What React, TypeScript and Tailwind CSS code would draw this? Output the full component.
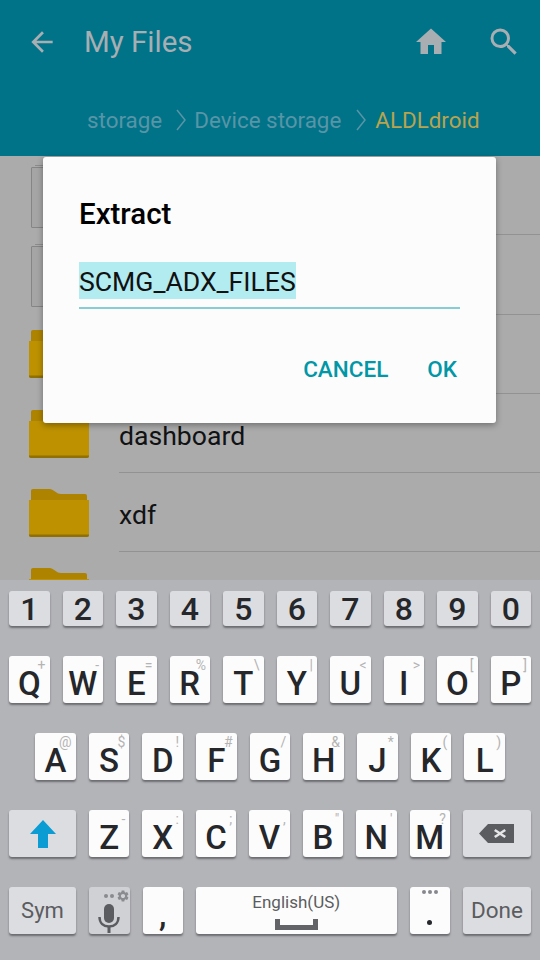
import { MdArrowBack, MdHome, MdSearch, MdSettings } from 'react-icons/md'

const FONT = { fontFamily: 'Roboto, sans-serif' }

const rows: { name: string; kind: 'file' | 'folder' }[] = [
  { name: '', kind: 'file' },
  { name: '', kind: 'file' },
  { name: '', kind: 'folder' },
  { name: 'dashboard', kind: 'folder' },
  { name: 'xdf', kind: 'folder' },
  { name: '', kind: 'folder' },
]

const numberRow = ['1', '2', '3', '4', '5', '6', '7', '8', '9', '0']
const topRow = [
  ['Q', '+'], ['W', '-'], ['E', '='], ['R', '%'], ['T', '\\'],
  ['Y', '|'], ['U', '<'], ['I', '>'], ['O', '['], ['P', ']'],
]
const homeRow = [
  ['A', '@'], ['S', '$'], ['D', '!'], ['F', '#'], ['G', '/'],
  ['H', '&'], ['J', '*'], ['K', '('], ['L', ')'],
]
const bottomRow = [
  ['Z', '-'], ['X', ':'], ['C', ';'], ['V', ','], ['B', '"'], ['N', "'"], ['M', '?'],
]

function FolderIcon() {
  return (
    <svg width="60" height="48" viewBox="0 0 60 48" className="shrink-0">
      <path d="M2 2q0-2 2-2h17q2 0 5 2.500 3 2.500 6 2.500h24q2 0 2 2v4H2z" fill="#ad8300" />
      <path d="M0 11h60v35q0 2-2 2H2q-2 0-2-2z" fill="#bd9100" />
      <path d="M0 46q0 2 2 2h56q2 0 2-2v-.6H0z" fill="#8f7000" />
    </svg>
  )
}

function FileIcon() {
  return (
    <div className="relative mt-[3px] ml-[2px] h-[61px] w-[48px] shrink-0 rounded-[1px] border border-[#858585] bg-[#a5a5a5]">
      <div className="absolute -top-[3px] left-[3px] h-[1px] w-[8px] bg-[#8c8c8c]" />
    </div>
  )
}

function ListRow({ name, kind }: { name: string; kind: 'file' | 'folder' }) {
  return (
    <div className="flex h-[79.3px] shrink-0 items-center pl-[29px]">
      <div className="w-[60px] shrink-0">{kind === 'file' ? <FileIcon /> : <FolderIcon />}</div>
      <div className="ml-[30px] flex h-full flex-1 items-center border-b border-[#929292] pt-[5px] text-[26.6px] text-[#111214]">
        {name}
      </div>
    </div>
  )
}

function Key({
  label,
  hint,
  className = '',
  dark = false,
  children,
}: {
  label?: string
  hint?: string
  className?: string
  dark?: boolean
  children?: React.ReactNode
}) {
  return (
    <div
      className={`relative flex min-w-0 flex-1 items-center justify-center rounded-[3px] shadow-[0_2px_2px_rgba(60,60,65,0.6)] ${
        dark ? 'bg-[#dcdde0]' : 'bg-[#fcfcfc]'
      } ${className}`}
    >
      {label && <span className="pt-[7px] text-[33px] leading-none font-medium text-[#25272b]">{label}</span>}
      {hint && (
        <span className="absolute -top-[1px] right-[4px] text-[14px] leading-[20px] text-[#b4b4b4]">{hint}</span>
      )}
      {children}
    </div>
  )
}

function Keyboard() {
  return (
    <div className="flex h-[380px] shrink-0 flex-col gap-[30px] bg-[#b3b4b8] px-[9px] pt-[11px]">
      <div className="flex h-[35px] gap-[13px]">
        {numberRow.map((n) => (
          <div
            key={n}
            className="flex flex-1 items-center justify-center rounded-[3px] bg-[#dcdde0] text-[32px] leading-none font-medium text-[#25272b] shadow-[0_2px_2px_rgba(60,60,65,0.6)]"
          >
            {n}
          </div>
        ))}
      </div>

      <div className="flex h-[47px] gap-[13px]">
        {topRow.map(([k, h]) => (
          <Key key={k} label={k} hint={h} />
        ))}
      </div>

      <div className="flex h-[47px] gap-[13px] px-[26px]">
        {homeRow.map(([k, h]) => (
          <Key key={k} label={k} hint={h} />
        ))}
      </div>

      <div className="flex h-[47px] gap-[13px]">
        <Key dark className="max-w-[67px] min-w-[67px]">
          <svg width="26" height="28" viewBox="0 0 26 28">
            <path d="M13 0l13 14h-8v14H8V14H0z" fill="#0b9cd4" />
          </svg>
        </Key>
        {bottomRow.map(([k, h]) => (
          <Key key={k} label={k} hint={h} />
        ))}
        <Key dark className="max-w-[68px] min-w-[68px]">
          <svg width="35" height="19" viewBox="0 0 35 19">
            <path d="M0 9.500L9 0h26v19H9z" fill="#5b5c60" />
            <path d="M16.500 5l4.500 3 4.500-3 1.500 2-4 2.500 4 2.500-1.500 2-4.500-3-4.500 3-1.500-2 4-2.500-4-2.500z" fill="#e6e6e8" />
          </svg>
        </Key>
      </div>

      <div className="flex h-[47px] gap-[13px]">
        <div className="flex w-[67px] shrink-0 items-center justify-center rounded-[3px] bg-[#dcdde0] text-[22px] text-[#5b5c60] shadow-[0_2px_2px_rgba(60,60,65,0.6)]">
          Sym
        </div>
        <div className="relative flex w-[40.500px] shrink-0 items-center justify-center rounded-[3px] bg-[#d0d1d4] shadow-[0_2px_2px_rgba(60,60,65,0.6)]">
          <svg width="22" height="29" viewBox="0 0 22 29" className="mt-[15px]">
            <rect x="6" y="0" width="10" height="19" rx="5" fill="#5b5c60" />
            <path d="M1.500 13c0 6 4 9.500 9.500 9.500s9.500-3.500 9.500-9.500" fill="none" stroke="#5b5c60" strokeWidth="2.500" />
            <rect x="9.500" y="22" width="3" height="7" fill="#5b5c60" />
          </svg>
          <div className="absolute top-[2px] right-0 flex items-center gap-[2px]">
            <span className="h-[4px] w-[4px] rounded-full bg-[#8a8b8f]" />
            <span className="h-[4px] w-[4px] rounded-full bg-[#8a8b8f]" />
            <MdSettings size={14} className="text-[#8a8b8f]" />
          </div>
        </div>
        <div className="flex w-[40.500px] shrink-0 items-end justify-center rounded-[3px] bg-[#fcfcfc] pb-[3px] text-[33px] leading-none font-medium text-[#25272b] shadow-[0_2px_2px_rgba(60,60,65,0.6)]">
          ,
        </div>
        <div className="flex flex-1 flex-col items-center rounded-[3px] bg-[#fcfcfc] pt-[5px] shadow-[0_2px_2px_rgba(60,60,65,0.6)]">
          <span className="text-[17px] leading-[20px] text-[#5b5c60]">English(US)</span>
          <svg width="43" height="11" viewBox="0 0 43 11" className="mt-[7px]">
            <path d="M0 0h5v6h33V0h5v11H0z" fill="#636468" />
          </svg>
        </div>
        <div className="relative flex w-[40.500px] shrink-0 items-center justify-center rounded-[3px] bg-[#fcfcfc] shadow-[0_2px_2px_rgba(60,60,65,0.6)]">
          <div className="absolute top-[3px] flex gap-[2px]">
            <span className="h-[4px] w-[4px] rounded-full bg-[#87888c]" />
            <span className="h-[4px] w-[4px] rounded-full bg-[#87888c]" />
            <span className="h-[4px] w-[4px] rounded-full bg-[#87888c]" />
          </div>
          <span className="mt-[23px] h-[5px] w-[5px] rounded-full bg-[#25272b]" />
        </div>
        <div className="flex w-[68px] shrink-0 items-center justify-center rounded-[3px] bg-[#dcdde0] text-[22.5px] text-[#5b5c60] shadow-[0_2px_2px_rgba(60,60,65,0.6)]">
          Done
        </div>
      </div>
    </div>
  )
}

export default function App() {
  return (
    <div className="relative flex h-[960px] w-[540px] flex-col overflow-hidden bg-[#ababab]" style={FONT}>
      <header className="h-[156px] shrink-0 bg-[#007389] text-[#a8aeb2]">
        <div className="flex h-[84px] items-center pl-[26px] pr-[18px]">
          <MdArrowBack size={32} />
          <h1 className="ml-[26px] flex-1 pt-[2px] text-[29.5px] leading-none">My Files</h1>
          <MdHome size={36} className="mr-[37px]" />
          <MdSearch size={36} />
        </div>
        <div className="flex items-center pt-[18px] pl-[87px] text-[22.4px] leading-[36px] text-[#5895a6]">
          <span>storage</span>
          <svg width="10" height="22" viewBox="0 0 10 22" className="mr-[8px] ml-[14px]">
            <path d="M1 1l8 10-8 10" fill="none" stroke="#5895a6" strokeWidth="1.500" />
          </svg>
          <span>Device storage</span>
          <svg width="10" height="22" viewBox="0 0 10 22" className="mr-[9px] ml-[15px]">
            <path d="M1 1l8 10-8 10" fill="none" stroke="#5895a6" strokeWidth="1.500" />
          </svg>
          <span className="text-[#b9a34e]">ALDLdroid</span>
        </div>
      </header>

      <div className="min-h-0 flex-1 overflow-hidden">
        {rows.map((r, i) => (
          <ListRow key={i} name={r.name} kind={r.kind} />
        ))}
      </div>

      <Keyboard />

      <div className="absolute top-[157px] left-[43px] h-[266px] w-[453px] rounded-[3px] bg-[#fcfcfc] px-[36px] pt-[40px] shadow-[0_2px_6px_rgba(0,0,0,0.35)]">
        <h2 className="text-[29.5px] leading-[34px] font-medium text-black">Extract</h2>
        <div className="mt-[31px] h-[47px] border-b-[2px] border-[#86cdd6]">
          <span className="inline-block h-[37px] bg-[#b2ebf0] text-[26.6px] leading-[39px] text-[#111]">
            SCMG_ADX_FILES
          </span>
        </div>
        <div className="mt-[43px] flex justify-end gap-[39px] pr-[3px] text-[22.5px] leading-[34px] font-medium text-[#0097a7]">
          <span>CANCEL</span>
          <span>OK</span>
        </div>
      </div>
    </div>
  )
}
